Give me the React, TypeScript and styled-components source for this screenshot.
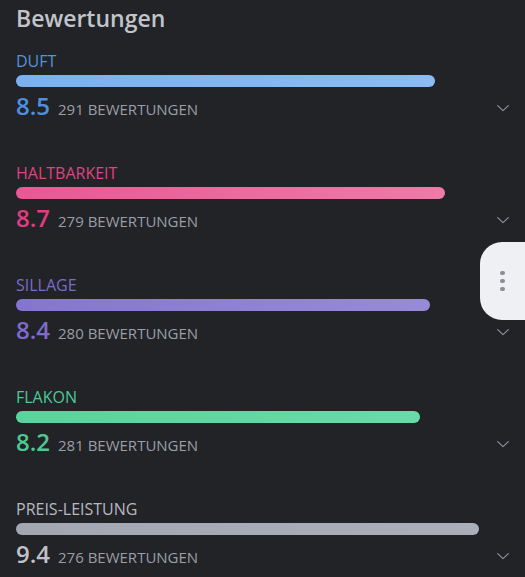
import React from 'react';
import styled, { createGlobalStyle } from 'styled-components';

const GlobalStyle = createGlobalStyle`
  html, body {
    margin: 0;
    padding: 0;
    background: #212327;
  }
  body {
    font-family: "Open Sans", "Noto Sans", sans-serif;
    -webkit-font-smoothing: antialiased;
  }
`;

const Page = styled.div`
  position: relative;
  width: 525px;
  height: 577px;
  overflow: hidden;
  background: #212327;
  padding: 2px 16px 0;
  box-sizing: border-box;
`;

const Title = styled.h2`
  margin: 0;
  font-size: 23px;
  line-height: 32px;
  font-weight: 600;
  color: #c2c4ca;
`;

const List = styled.div`
  display: flex;
  flex-direction: column;
  gap: 43px;
  margin-top: 17px;
`;

const Section = styled.div`
  display: flex;
  flex-direction: column;
`;

const Label = styled.div<{ $color: string }>`
  font-size: 16px;
  line-height: 20px;
  color: ${p => p.$color};
  text-transform: uppercase;
`;

const Bar = styled.div<{ $from: string; $to: string }>`
  margin-top: 4px;
  height: 12px;
  border-radius: 6px;
  background: linear-gradient(90deg, ${p => p.$from}, ${p => p.$to});
`;

const ScoreRow = styled.div`
  display: flex;
  align-items: baseline;
  margin-top: 5px;
  height: 28px;
`;

const Score = styled.span<{ $color: string }>`
  font-size: 24px;
  line-height: 28px;
  font-weight: 600;
  color: ${p => p.$color};
`;

const Count = styled.span`
  margin-left: 8px;
  font-size: 15px;
  line-height: 28px;
  color: #9c9ea5;
`;

const Chevron = styled.svg`
  align-self: center;
  margin-left: auto;
  margin-right: -2px;
  margin-top: 4px;
  width: 16px;
  height: 16px;
  color: #8d9098;
`;

const SideHandle = styled.div`
  position: absolute;
  right: 0;
  top: 242px;
  width: 45px;
  height: 78px;
  background: #eef0f4;
  border-radius: 22px 0 0 22px;
  display: flex;
  flex-direction: column;
  align-items: center;
  justify-content: center;
  gap: 3.5px;
`;

const Dot = styled.span`
  width: 4.5px;
  height: 4.5px;
  border-radius: 50%;
  background: #8b8c98;
`;

interface Rating {
  name: string;
  score: number;
  count: number;
  label: string;
  from: string;
  to: string;
  scoreColor: string;
}

const ratings: Rating[] = [
  { name: 'Duft', score: 8.5, count: 291, label: '#5592d8', from: '#7bb1f0', to: '#8bbcf3', scoreColor: '#4f90dc' },
  { name: 'Haltbarkeit', score: 8.7, count: 279, label: '#de4482', from: '#ea5794', to: '#f07aa8', scoreColor: '#e23d80' },
  { name: 'Sillage', score: 8.4, count: 280, label: '#7d6bc8', from: '#8575d0', to: '#978bd8', scoreColor: '#7e6bcc' },
  { name: 'Flakon', score: 8.2, count: 281, label: '#4fc893', from: '#58d49c', to: '#68dba8', scoreColor: '#4fc893' },
  { name: 'Preis-Leistung', score: 9.4, count: 276, label: '#b7b9c0', from: '#a3a6b3', to: '#abaebb', scoreColor: '#c0c2c8' },
];

function App(): React.JSX.Element {
  return (
    <>
      <GlobalStyle />
      <Page>
        <Title>Bewertungen</Title>
        <List>
          {ratings.map(r => (
            <Section key={r.name}>
              <Label $color={r.label}>{r.name}</Label>
              <Bar $from={r.from} $to={r.to} style={{ width: `${r.score * 10}%` }} />
              <ScoreRow>
                <Score $color={r.scoreColor}>{r.score.toFixed(1)}</Score>
                <Count>{r.count} BEWERTUNGEN</Count>
                <Chevron viewBox="0 0 24 24" fill="none" stroke="currentColor" strokeWidth="1.8" strokeLinecap="round" strokeLinejoin="round">
                  <path d="M4 8.5l8 7.5 8-7.5" />
                </Chevron>
              </ScoreRow>
            </Section>
          ))}
        </List>
        <SideHandle>
          <Dot />
          <Dot />
          <Dot />
        </SideHandle>
      </Page>
    </>
  );
}

export default App;
